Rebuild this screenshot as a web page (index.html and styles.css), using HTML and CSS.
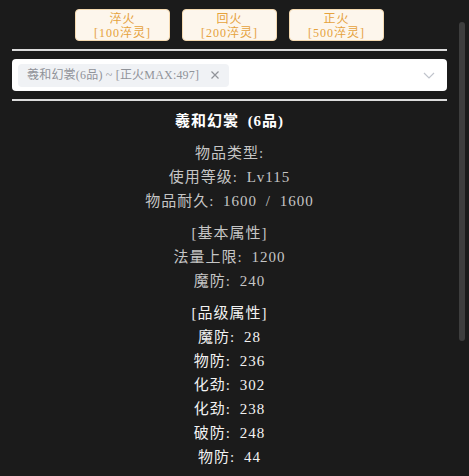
FILE: index.html
```html
<!DOCTYPE html>
<html lang="zh">
<head>
<meta charset="utf-8">
<link rel="stylesheet" href="styles.css">
</head>
<body>
<div class="page">
  <div class="actions">
    <button class="btn"><span class="btn-line">淬火</span><span class="btn-line">[100淬灵]</span></button>
    <button class="btn"><span class="btn-line">回火</span><span class="btn-line">[200淬灵]</span></button>
    <button class="btn"><span class="btn-line">正火</span><span class="btn-line">[500淬灵]</span></button>
  </div>
  <div class="rule"></div>
  <div class="select">
    <span class="tag"><span class="tag-text">羲和幻裳(6品) ~ [正火MAX:497]</span>
      <svg class="tag-close" width="10" height="10" viewBox="0 0 10 10"><path d="M1.5 1.5 L8.5 8.5 M8.5 1.5 L1.5 8.5" stroke="#909399" stroke-width="1.2" fill="none"/></svg>
    </span>
    <svg class="chevron" width="12" height="7" viewBox="0 0 12 7"><polyline points="1,1 6,6 11,1" stroke="#c0c4cc" stroke-width="1.2" fill="none"/></svg>
  </div>
  <div class="rule"></div>
  <div class="detail">
    <div class="title">羲和幻裳 (6品)</div>
    <div class="group base">
      <div class="line">物品类型:</div>
      <div class="line">使用等级: Lv115</div>
      <div class="line">物品耐久: 1600 / 1600</div>
    </div>
    <div class="group base">
      <div class="line">[基本属性]</div>
      <div class="line">法量上限: 1200</div>
      <div class="line">魔防: 240</div>
    </div>
    <div class="group grade">
      <div class="line">[品级属性]</div>
      <div class="line">魔防: 28</div>
      <div class="line">物防: 236</div>
      <div class="line">化劲: 302</div>
      <div class="line">化劲: 238</div>
      <div class="line">破防: 248</div>
      <div class="line">物防: 44</div>
    </div>
  </div>
</div>
<div class="scrollbar"></div>
</body>
</html>
```

FILE: styles.css
```css
html, body {
  margin: 0;
  padding: 0;
  height: 100%;
  overflow: hidden;
  background: #1b1b1b;
}
body {
  font-family: "Liberation Serif", "Noto Sans CJK SC", serif;
}
.page {
  padding: 9px 22px 0 12px;
}
.actions {
  display: flex;
  justify-content: center;
  gap: 12px;
}
.btn {
  width: 95px;
  height: 32px;
  padding: 2px 0 0;
  border: 1px solid #f5dab1;
  background: #fdf6ec;
  color: #e6a23c;
  border-radius: 4px;
  font-family: "Liberation Serif", "Noto Sans CJK SC", serif;
  font-size: 12px;
  letter-spacing: 1px;
  display: flex;
  flex-direction: column;
  align-items: center;
  justify-content: flex-start;
  box-sizing: border-box;
}
.btn-line {
  display: block;
  height: 14px;
  line-height: 14px;
}
.rule {
  height: 2px;
  background: #dcdcdc;
  margin: 8px 0;
}
.select {
  height: 32px;
  background: #fff;
  border-radius: 4px;
  display: flex;
  align-items: center;
  padding: 0 12px 0 6px;
  box-sizing: border-box;
}
.tag {
  display: flex;
  align-items: center;
  height: 23px;
  padding: 0 9px;
  background: #f0f2f5;
  border-radius: 4px;
  color: #909399;
  font-size: 12px;
}
.tag-text {
  display: block;
  height: 14px;
  line-height: 14px;
  white-space: pre;
  letter-spacing: 0.2px;
}
.tag-close {
  margin-left: 11px;
}
.chevron {
  margin-left: auto;
}
.detail {
  text-align: center;
  word-spacing: 0.25em;
  letter-spacing: 1px;
}
.title {
  color: #ffffff;
  font-size: 15px;
  font-weight: 600;
  height: 24px;
  line-height: 24px;
}
.group {
  margin-top: 8px;
  font-size: 15px;
}
.line {
  height: 24px;
  line-height: 24px;
}
.base {
  color: #c6c6c6;
}
.grade {
  color: #f2f2f2;
}
.scrollbar {
  position: fixed;
  left: 459px;
  top: 22px;
  width: 6px;
  height: 319px;
  background: #3e3e3e;
  border-radius: 3px;
}
```
